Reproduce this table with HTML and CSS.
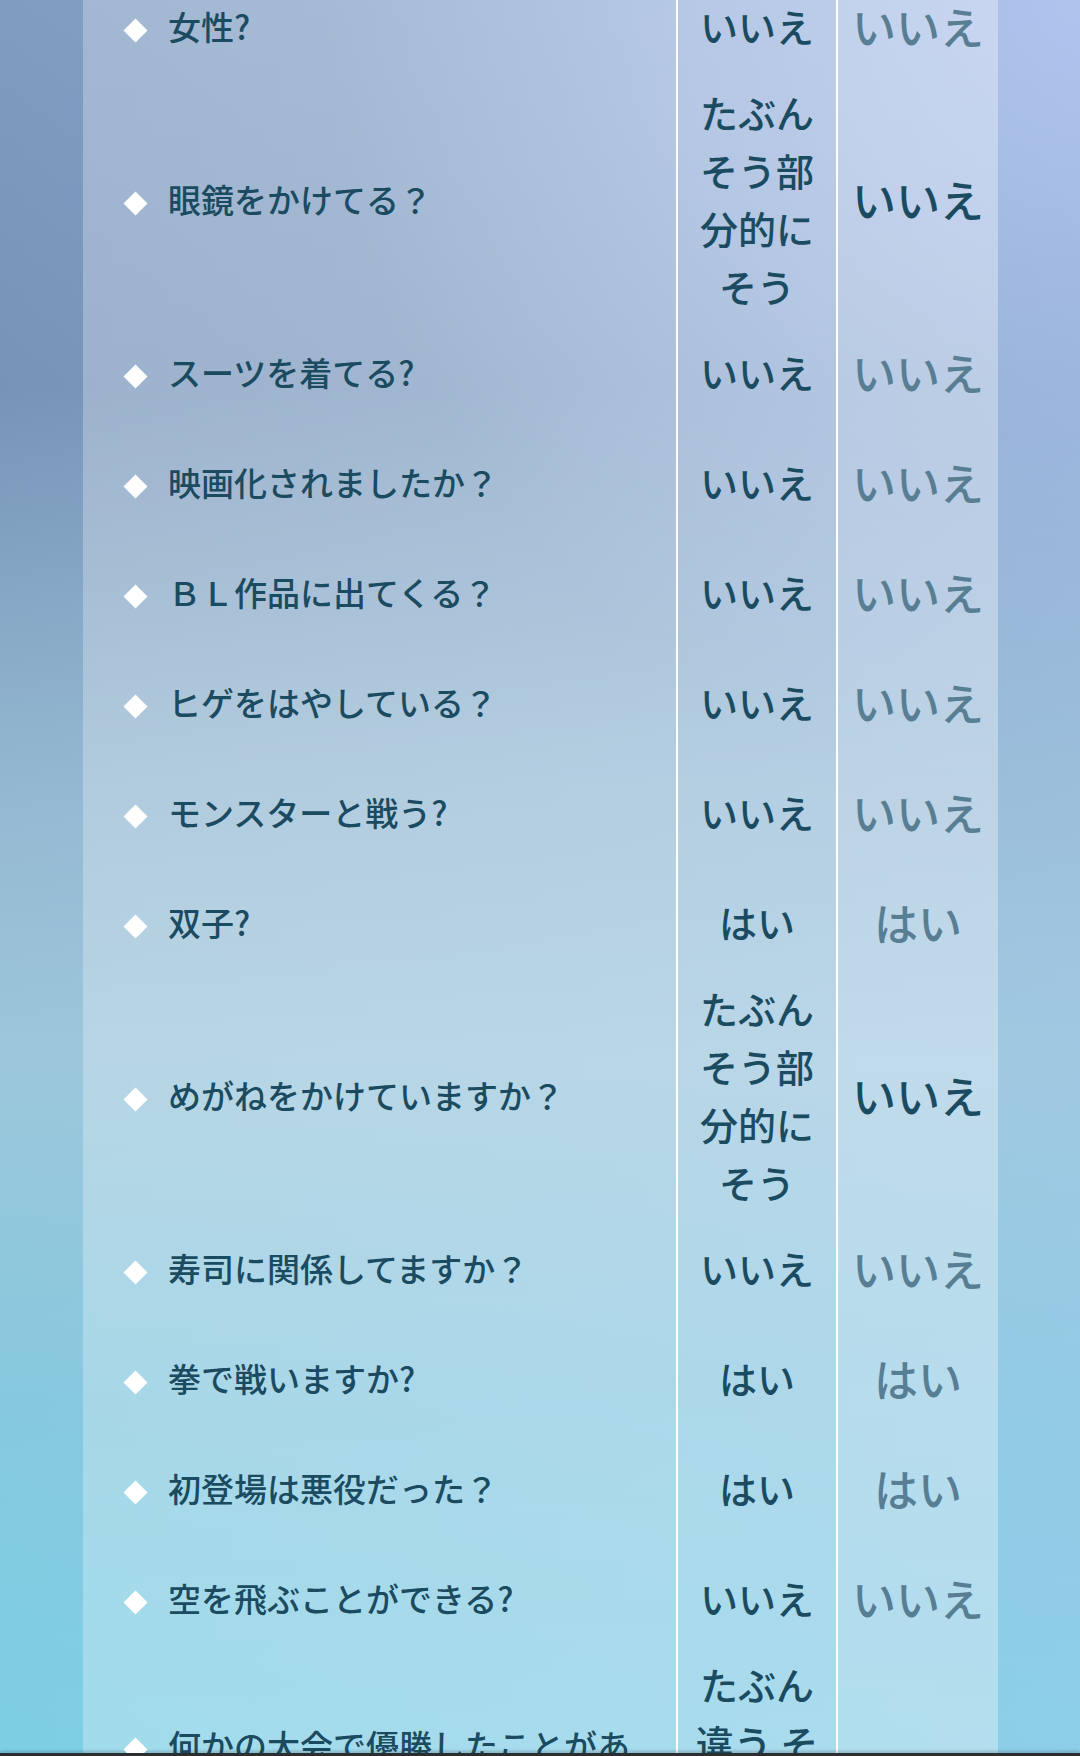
FILE: index.html
```html
<!DOCTYPE html>
<html lang="ja">
<head>
<meta charset="utf-8">
<title>質問と回答</title>
<link rel="stylesheet" href="styles.css">
</head>
<body>
<div class="screen">
  <div class="viewport">
    <main class="panel">
      <div class="row">
        <div class="q"><span class="mark"></span><span class="qt">女性?</span></div>
        <div class="a">いいえ</div>
        <div class="b same">いいえ</div>
      </div>
      <div class="row">
        <div class="q"><span class="mark"></span><span class="qt">眼鏡をかけてる？</span></div>
        <div class="a">たぶんそう部分的にそう</div>
        <div class="b diff">いいえ</div>
      </div>
      <div class="row">
        <div class="q"><span class="mark"></span><span class="qt">スーツを着てる?</span></div>
        <div class="a">いいえ</div>
        <div class="b same">いいえ</div>
      </div>
      <div class="row">
        <div class="q"><span class="mark"></span><span class="qt">映画化されましたか？</span></div>
        <div class="a">いいえ</div>
        <div class="b same">いいえ</div>
      </div>
      <div class="row">
        <div class="q"><span class="mark"></span><span class="qt">ＢＬ作品に出てくる？</span></div>
        <div class="a">いいえ</div>
        <div class="b same">いいえ</div>
      </div>
      <div class="row">
        <div class="q"><span class="mark"></span><span class="qt">ヒゲをはやしている？</span></div>
        <div class="a">いいえ</div>
        <div class="b same">いいえ</div>
      </div>
      <div class="row">
        <div class="q"><span class="mark"></span><span class="qt">モンスターと戦う?</span></div>
        <div class="a">いいえ</div>
        <div class="b same">いいえ</div>
      </div>
      <div class="row">
        <div class="q"><span class="mark"></span><span class="qt">双子?</span></div>
        <div class="a">はい</div>
        <div class="b same">はい</div>
      </div>
      <div class="row">
        <div class="q"><span class="mark"></span><span class="qt">めがねをかけていますか？</span></div>
        <div class="a">たぶんそう部分的にそう</div>
        <div class="b diff">いいえ</div>
      </div>
      <div class="row">
        <div class="q"><span class="mark"></span><span class="qt">寿司に関係してますか？</span></div>
        <div class="a">いいえ</div>
        <div class="b same">いいえ</div>
      </div>
      <div class="row">
        <div class="q"><span class="mark"></span><span class="qt">拳で戦いますか?</span></div>
        <div class="a">はい</div>
        <div class="b same">はい</div>
      </div>
      <div class="row">
        <div class="q"><span class="mark"></span><span class="qt">初登場は悪役だった？</span></div>
        <div class="a">はい</div>
        <div class="b same">はい</div>
      </div>
      <div class="row">
        <div class="q"><span class="mark"></span><span class="qt">空を飛ぶことができる?</span></div>
        <div class="a">いいえ</div>
        <div class="b same">いいえ</div>
      </div>
      <div class="row">
        <div class="q"><span class="mark"></span><span class="qt">何かの大会で優勝したことがある？</span></div>
        <div class="a">たぶん違う そうでもない</div>
        <div class="b diff">いいえ</div>
      </div>
    </main>
  </div>
  <div class="bar"></div>
</div>
</body>
</html>
```

FILE: styles.css
```css
html, body {
  margin: 0;
  padding: 0;
}

body {
  font-family: "Noto Sans CJK JP", "Noto Sans", sans-serif;
  font-weight: 500;
  color: #1b4b60;
  background-color: #8fb3cf;
  background-image:
    radial-gradient(ellipse 70% 45% at 100% 0%, rgba(190, 206, 250, 0.7), rgba(190, 206, 250, 0) 100%),
    linear-gradient(to right, rgba(170, 205, 240, 0) 0%, rgba(170, 205, 240, 0.35) 100%),
    linear-gradient(to bottom, #7f9cc1 0%, #7794b8 22%, #94b8d1 45%, #9cc6da 60%, #86c9df 80%, #7dcfe4 100%);
}

.screen {
  height: 1756px;
  display: flex;
  flex-direction: column;
  overflow: hidden;
}

.viewport {
  flex: 1;
  overflow: hidden;
  padding: 0 82px 0 83px;
}

.panel {
  margin-top: -29px;
  min-height: 2000px;
  background: rgba(255, 255, 255, 0.27);
}

.row {
  display: grid;
  grid-template-columns: 593px 160px 162px;
}

.q {
  align-self: center;
  display: flex;
  align-items: flex-start;
  padding: 29px 30px 29px 40px;
  font-size: 33px;
  line-height: 52px;
}

.mark {
  flex: none;
  width: 24px;
  height: 52px;
  margin-right: 21px;
  display: flex;
  align-items: center;
  justify-content: center;
}

.mark::before {
  content: "";
  width: 17px;
  height: 17px;
  margin-top: 9px;
  background: #ffffff;
  transform: rotate(45deg);
}

.qt {
  min-width: 0;
}

.a,
.b {
  box-sizing: border-box;
  border-left: 2px solid #ffffff;
  display: flex;
  align-items: center;
  justify-content: center;
  text-align: center;
  padding: 2px 8px;
  line-height: 58px;
}

.a {
  font-size: 38px;
}

.b {
  font-size: 44px;
  background: rgba(255, 255, 255, 0.1);
}

.b.same {
  color: #587e93;
}

.b.diff {
  color: #1b4b60;
}

.bar {
  flex: none;
  height: 3px;
  background: #2b2f31;
  box-shadow: 0 -2px 3px rgba(40, 50, 60, 0.25);
}
```
